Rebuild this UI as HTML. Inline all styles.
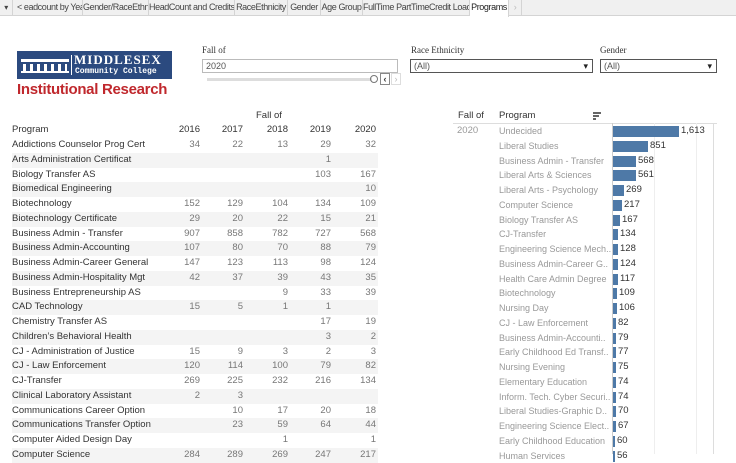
<!DOCTYPE html>
<html><head><meta charset="utf-8"><style>
*{margin:0;padding:0;box-sizing:border-box}
body{width:736px;height:454px;overflow:hidden;background:#fff;font-family:"Liberation Sans",sans-serif;position:relative;color:#333}
.tabs{position:absolute;left:0;top:0;width:736px;height:16px;background:#f0f0f0;border-bottom:1px solid #d4d4d4;font-size:9px;color:#444;letter-spacing:-0.4px}
.tab{position:absolute;top:0;height:16px;line-height:15px;border-right:1px solid #d4d4d4;text-align:center;white-space:nowrap;overflow:hidden}
.abs{position:absolute}
.lbl{font-family:"Liberation Serif",serif;font-size:9px;color:#333}
.inp{position:absolute;height:14px;border:1px solid #999;font-size:9px;line-height:12px;padding-left:3px;color:#555;background:#fff}
.dd{border:1px solid #555}
.dd:after{content:"▾";position:absolute;right:4px;top:0;font-size:9px;color:#222}
.lt{position:absolute;left:12px;width:366px;font-size:9.5px}
.lt .r{height:14.75px;line-height:14.75px;position:relative;white-space:nowrap}
.lt .r:nth-child(even){background:#f4f4f4}
.lt .r span{position:absolute;top:0;text-align:right;width:40px;color:#777}
.lt .r span.n{position:static;color:#333;text-align:left}
.c1{left:148px}.c2{left:191px}.c3{left:236px}.c4{left:279px}.c5{left:324px}
.rt{position:absolute;left:499px;top:124px;font-size:9px;color:#999}
.rt .r{height:14.75px;line-height:14.75px;position:relative;white-space:nowrap;width:230px}
.rt .r i{position:absolute;left:114px;top:2px;height:11px;background:#4e79a7}
.rt .r b{position:absolute;top:0;font-weight:normal;color:#333;font-size:9.5px}
</style></head><body>
<div class="tabs">
<div class="tab" style="left:0;width:13px;font-size:8px">▾</div>
<div class="tab" style="left:13px;width:70px;text-align:left"><span style="padding:0 2px 0 4px">&lt;</span>eadcount by Year</div>
<div class="tab" style="left:83px;width:66px">Gender/RaceEthn</div>
<div class="tab" style="left:149px;width:86px">HeadCount and Credits</div>
<div class="tab" style="left:235px;width:53px">RaceEthnicity</div>
<div class="tab" style="left:288px;width:33px">Gender</div>
<div class="tab" style="left:321px;width:42px">Age Group</div>
<div class="tab" style="left:363px;width:107px">FullTime PartTimeCredit Load</div>
<div class="tab" style="left:470px;width:39px;background:#fff;height:17px;color:#222">Programs</div>
<div class="tab" style="left:509px;width:13px;color:#bbb">›</div>
</div>

<div class="abs" style="left:17px;top:51px;width:155px;height:28px;background:#2b4a7f;color:#fff">
 <div class="abs" style="left:4px;top:8px;width:48px;height:3px;background:#fff"></div>
 <div class="abs" style="left:6px;top:13px;width:44px;height:7px;background:repeating-linear-gradient(90deg,#fff 0 3px,transparent 3px 7px)"></div>
 <div class="abs" style="left:4px;top:20px;width:48px;height:2px;background:#fff"></div>
 <div class="abs" style="left:54px;top:4px;width:1px;height:20px;background:#fff"></div>
 <div class="abs" style="left:57px;top:1px;font-family:'Liberation Serif',serif;font-size:13px;font-weight:bold;letter-spacing:1px">MIDDLESEX</div>
 <div class="abs" style="left:58px;top:16px;font-family:'Liberation Mono',monospace;font-size:8px;font-weight:bold">Community College</div>
</div>
<div class="abs" style="left:17px;top:81px;font-size:15px;font-weight:bold;color:#c0282d;letter-spacing:-0.3px">Institutional Research</div>

<div class="abs lbl" style="left:202px;top:45px">Fall of</div>
<div class="inp" style="left:202px;top:59px;width:196px;border-color:#bbb">2020</div>
<div class="abs" style="left:207px;top:78px;width:165px;height:3px;background:#ddd"></div>
<div class="abs" style="left:370px;top:75px;width:8px;height:8px;border:1px solid #777;border-radius:50%"></div>
<div class="abs" style="left:380px;top:73px;width:10px;height:12px;border:1px solid #888;font-size:9px;line-height:10px;text-align:center;font-weight:bold">‹</div>
<div class="abs" style="left:391px;top:73px;width:10px;height:12px;border:1px solid #ddd;font-size:9px;line-height:10px;text-align:center;color:#bbb">›</div>
<div class="abs lbl" style="left:411px;top:45px">Race Ethnicity</div>
<div class="inp dd" style="left:410px;top:59px;width:183px">(All)</div>
<div class="abs lbl" style="left:600px;top:45px">Gender</div>
<div class="inp dd" style="left:600px;top:59px;width:117px">(All)</div>

<div class="abs" style="left:256px;top:110px;font-size:9.5px;color:#333">Fall of</div>
<div class="lt" style="top:123px">
<div class="r" style="background:#fff"><span class="n">Program</span><span class="c1" style="color:#333">2016</span><span class="c2" style="color:#333">2017</span><span class="c3" style="color:#333">2018</span><span class="c4" style="color:#333">2019</span><span class="c5" style="color:#333">2020</span></div>
</div>
<div class="lt" style="top:138px">
<div class="r"><span class="n">Addictions Counselor Prog Cert</span><span class="c1">34</span><span class="c2">22</span><span class="c3">13</span><span class="c4">29</span><span class="c5">32</span></div>
<div class="r"><span class="n">Arts Administration Certificat</span><span class="c4">1</span></div>
<div class="r"><span class="n">Biology Transfer AS</span><span class="c4">103</span><span class="c5">167</span></div>
<div class="r"><span class="n">Biomedical Engineering</span><span class="c5">10</span></div>
<div class="r"><span class="n">Biotechnology</span><span class="c1">152</span><span class="c2">129</span><span class="c3">104</span><span class="c4">134</span><span class="c5">109</span></div>
<div class="r"><span class="n">Biotechnology Certificate</span><span class="c1">29</span><span class="c2">20</span><span class="c3">22</span><span class="c4">15</span><span class="c5">21</span></div>
<div class="r"><span class="n">Business Admin - Transfer</span><span class="c1">907</span><span class="c2">858</span><span class="c3">782</span><span class="c4">727</span><span class="c5">568</span></div>
<div class="r"><span class="n">Business Admin-Accounting</span><span class="c1">107</span><span class="c2">80</span><span class="c3">70</span><span class="c4">88</span><span class="c5">79</span></div>
<div class="r"><span class="n">Business Admin-Career General</span><span class="c1">147</span><span class="c2">123</span><span class="c3">113</span><span class="c4">98</span><span class="c5">124</span></div>
<div class="r"><span class="n">Business Admin-Hospitality Mgt</span><span class="c1">42</span><span class="c2">37</span><span class="c3">39</span><span class="c4">43</span><span class="c5">35</span></div>
<div class="r"><span class="n">Business Entrepreneurship AS</span><span class="c3">9</span><span class="c4">33</span><span class="c5">39</span></div>
<div class="r"><span class="n">CAD Technology</span><span class="c1">15</span><span class="c2">5</span><span class="c3">1</span><span class="c4">1</span></div>
<div class="r"><span class="n">Chemistry Transfer AS</span><span class="c4">17</span><span class="c5">19</span></div>
<div class="r"><span class="n">Children’s Behavioral Health</span><span class="c4">3</span><span class="c5">2</span></div>
<div class="r"><span class="n">CJ - Administration of Justice</span><span class="c1">15</span><span class="c2">9</span><span class="c3">3</span><span class="c4">2</span><span class="c5">3</span></div>
<div class="r"><span class="n">CJ - Law Enforcement</span><span class="c1">120</span><span class="c2">114</span><span class="c3">100</span><span class="c4">79</span><span class="c5">82</span></div>
<div class="r"><span class="n">CJ-Transfer</span><span class="c1">269</span><span class="c2">225</span><span class="c3">232</span><span class="c4">216</span><span class="c5">134</span></div>
<div class="r"><span class="n">Clinical Laboratory Assistant</span><span class="c1">2</span><span class="c2">3</span></div>
<div class="r"><span class="n">Communications Career Option</span><span class="c2">10</span><span class="c3">17</span><span class="c4">20</span><span class="c5">18</span></div>
<div class="r"><span class="n">Communications Transfer Option</span><span class="c2">23</span><span class="c3">59</span><span class="c4">64</span><span class="c5">44</span></div>
<div class="r"><span class="n">Computer Aided Design Day</span><span class="c3">1</span><span class="c5">1</span></div>
<div class="r"><span class="n">Computer Science</span><span class="c1">284</span><span class="c2">289</span><span class="c3">269</span><span class="c4">247</span><span class="c5">217</span></div>
</div>

<div class="abs" style="left:458px;top:110px;font-size:9.5px;color:#333">Fall of</div>
<div class="abs" style="left:499px;top:110px;font-size:9.5px;color:#333">Program</div>
<div class="abs" style="left:593px;top:112px;width:8px;height:1.5px;background:#666"></div>
<div class="abs" style="left:593px;top:115px;width:6px;height:1.5px;background:#666"></div>
<div class="abs" style="left:593px;top:118px;width:3px;height:1.5px;background:#666"></div>
<div class="abs" style="left:453px;top:123px;width:264px;height:1px;background:#ddd"></div>
<div class="abs" style="left:612px;top:123px;width:1px;height:331px;background:#ccc"></div>
<div class="abs" style="left:654px;top:123px;width:1px;height:331px;background:#eee"></div>
<div class="abs" style="left:696px;top:123px;width:1px;height:331px;background:#eee"></div>
<div class="abs" style="left:713px;top:123px;width:1px;height:331px;background:#ddd"></div>
<div class="abs" style="left:457px;top:124px;font-size:9.5px;color:#999;line-height:14.75px">2020</div>
<div class="rt">
<div class="r">Undecided<i style="width:66px"></i><b style="left:182px">1,613</b></div>
<div class="r">Liberal Studies<i style="width:35px"></i><b style="left:151px">851</b></div>
<div class="r">Business Admin - Transfer<i style="width:23px"></i><b style="left:139px">568</b></div>
<div class="r">Liberal Arts &amp; Sciences<i style="width:23px"></i><b style="left:139px">561</b></div>
<div class="r">Liberal Arts - Psychology<i style="width:11px"></i><b style="left:127px">269</b></div>
<div class="r">Computer Science<i style="width:9px"></i><b style="left:125px">217</b></div>
<div class="r">Biology Transfer AS<i style="width:7px"></i><b style="left:123px">167</b></div>
<div class="r">CJ-Transfer<i style="width:5px"></i><b style="left:121px">134</b></div>
<div class="r">Engineering Science Mech..<i style="width:5px"></i><b style="left:121px">128</b></div>
<div class="r">Business Admin-Career G..<i style="width:5px"></i><b style="left:121px">124</b></div>
<div class="r">Health Care Admin Degree<i style="width:5px"></i><b style="left:121px">117</b></div>
<div class="r">Biotechnology<i style="width:4px"></i><b style="left:120px">109</b></div>
<div class="r">Nursing Day<i style="width:4px"></i><b style="left:120px">106</b></div>
<div class="r">CJ - Law Enforcement<i style="width:3px"></i><b style="left:119px">82</b></div>
<div class="r">Business Admin-Accounti..<i style="width:3px"></i><b style="left:119px">79</b></div>
<div class="r">Early Childhood Ed Transf..<i style="width:3px"></i><b style="left:119px">77</b></div>
<div class="r">Nursing Evening<i style="width:3px"></i><b style="left:119px">75</b></div>
<div class="r">Elementary Education<i style="width:3px"></i><b style="left:119px">74</b></div>
<div class="r">Inform. Tech. Cyber Securi..<i style="width:3px"></i><b style="left:119px">74</b></div>
<div class="r">Liberal Studies-Graphic D..<i style="width:3px"></i><b style="left:119px">70</b></div>
<div class="r">Engineering Science Elect..<i style="width:3px"></i><b style="left:119px">67</b></div>
<div class="r">Early Childhood Education<i style="width:2px"></i><b style="left:118px">60</b></div>
<div class="r">Human Services<i style="width:2px"></i><b style="left:118px">56</b></div>
</div>
</body></html>
